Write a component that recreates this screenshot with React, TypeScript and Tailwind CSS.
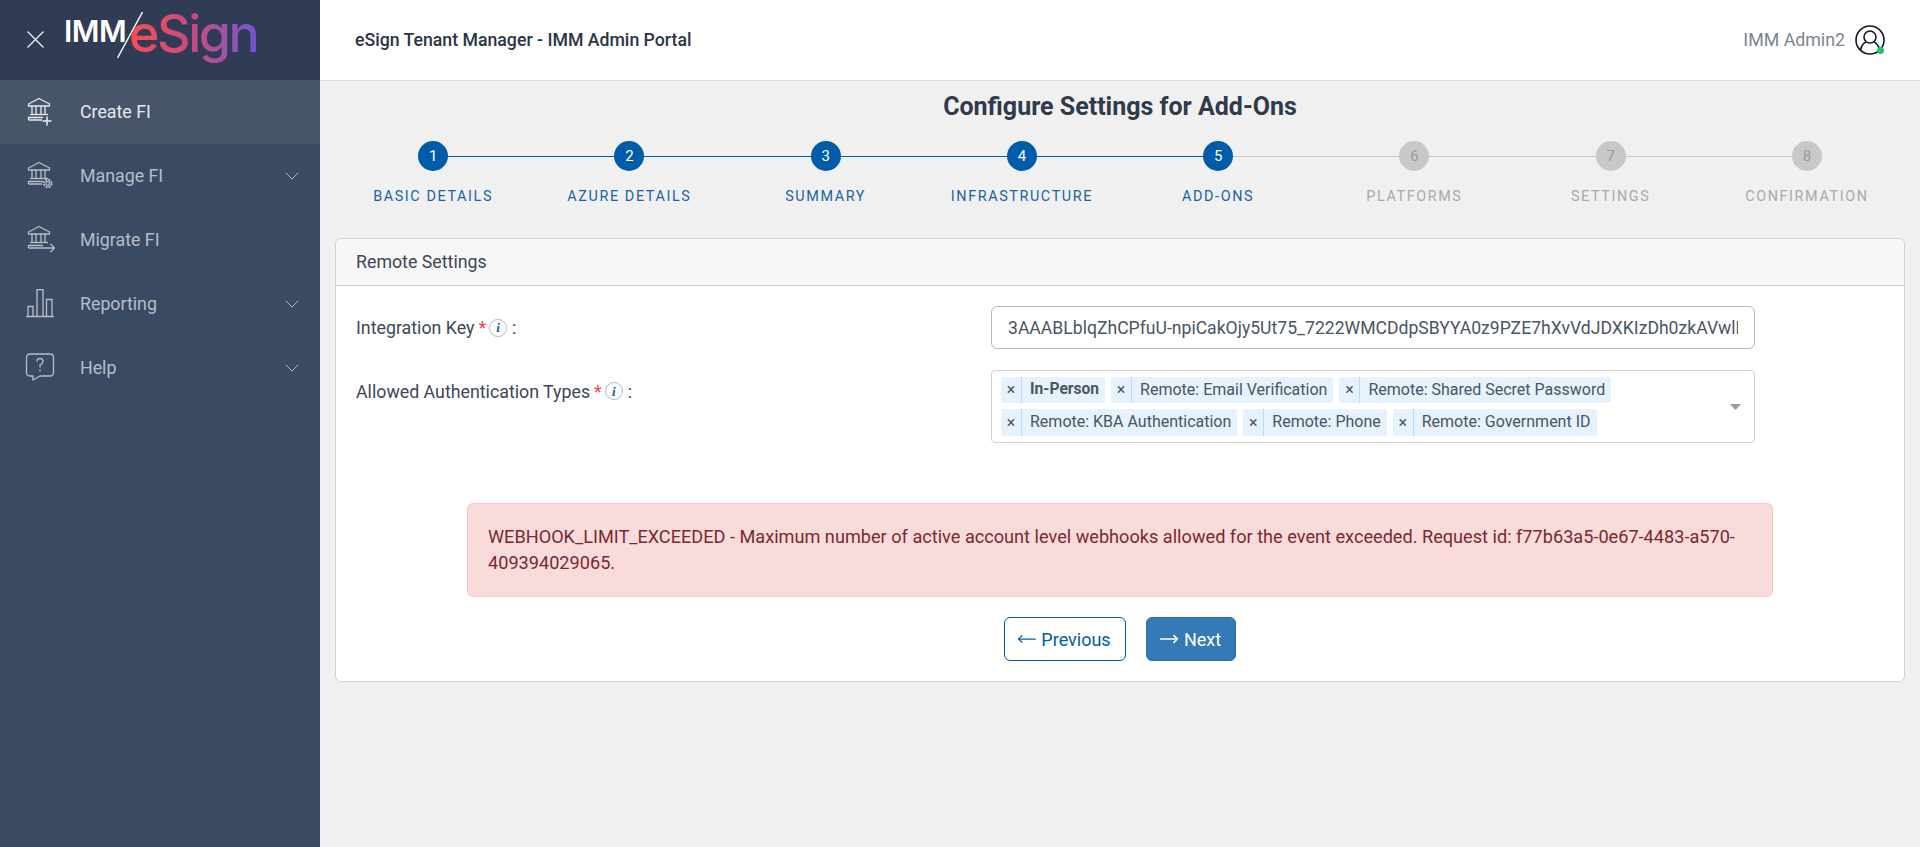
import React from 'react';
import { ChevronDown, MoveLeft, MoveRight } from 'lucide-react';

const FONT = "font-['Roboto',sans-serif]";

const BankBase: React.FC<{ children?: React.ReactNode }> = ({ children }) => (
  <svg width="30" height="30" viewBox="0 0 30 30" fill="none" stroke="currentColor" strokeWidth="1.3">
    <path d="M3.5 7 L14 1.5 L24.5 7 V9 H3.5 Z" strokeLinejoin="round" />
    <path d="M7 9 V17 M11 9 V17 M16 9 V17 M20 9 V17" />
    <path d="M5 17.5 H23" />
    <path d="M3.5 23 V20.5 H18 M3.5 23 H17" />
    {children}
  </svg>
);

const NAV = [
  {
    label: 'Create FI',
    active: true,
    icon: (
      <BankBase>
        <path d="M22 19.5 V28.5 M17.5 24 H26.5" strokeWidth="1.5" />
      </BankBase>
    ),
  },
  {
    label: 'Manage FI',
    chevron: true,
    icon: (
      <BankBase>
        <circle cx="22.7" cy="22.5" r="1.8" />
        <circle cx="22.7" cy="22.5" r="3.8" strokeDasharray="2 1" strokeWidth="1.9" />
      </BankBase>
    ),
  },
  {
    label: 'Migrate FI',
    icon: (
      <BankBase>
        <path d="M17 23 H29.5 M25.5 19 L29.5 23 L25.5 27" />
      </BankBase>
    ),
  },
  {
    label: 'Reporting',
    chevron: true,
    icon: (
      <svg width="30" height="30" viewBox="0 0 30 30" fill="none" stroke="currentColor" strokeWidth="1.3">
        <path d="M1 27.5 H29 M3 27 V17.5 H8 V27 M12 27 V0.7 H18 V27 M21.5 27 V10.5 H27 V27" />
      </svg>
    ),
  },
  {
    label: 'Help',
    chevron: true,
    icon: (
      <svg width="30" height="30" viewBox="0 0 30 30" fill="none" stroke="currentColor" strokeWidth="1.3">
        <path d="M5 1 H25 Q28.5 1 28.5 4.5 V19.5 Q28.5 23 25 23 H15 L8 27 V23 H5 Q1.5 23 1.5 19.5 V4.5 Q1.5 1 5 1 Z" strokeLinejoin="round" />
        <path d="M12 8.5 Q12 5.5 15 5.5 Q18 5.5 18 8.5 Q18 10.5 15 12 V14.5 M15 16.5 V18.5" />
      </svg>
    ),
  },
];

const STEPS = [
  'BASIC DETAILS',
  'AZURE DETAILS',
  'SUMMARY',
  'INFRASTRUCTURE',
  'ADD-ONS',
  'PLATFORMS',
  'SETTINGS',
  'CONFIRMATION',
];

const CHIPS = [
  ['In-Person', 'Remote: Email Verification', 'Remote: Shared Secret Password'],
  ['Remote: KBA Authentication', 'Remote: Phone', 'Remote: Government ID'],
];

const InfoIcon = () => (
  <span className="mx-[3px] mb-[2px] inline-flex h-[18px] w-[18px] items-center justify-center rounded-full border border-[#a9bdd1] font-['Liberation_Serif',serif] text-[13px] font-bold italic leading-none text-[#0b5ca5]">
    i
  </span>
);

const FieldLabel: React.FC<{ text: string }> = ({ text }) => (
  <div className="flex w-[635px] shrink-0 items-center text-[17.8px] text-[#3d4757]">
    <span>{text}</span>
    <span className="ml-[4px] text-[#e5484d]">*</span>
    <InfoIcon />
    <span className="ml-[2px]">:</span>
  </div>
);

const App: React.FC = () => {
  return (
    <div className={`flex min-h-screen bg-[#f0f0f0] ${FONT}`}>
      {/* Sidebar */}
      <aside className="flex w-[320px] shrink-0 flex-col bg-[#3b4a63]">
        <div className="flex h-[80px] items-start overflow-hidden bg-[#303c55] pl-[27px]">
          <svg width="17" height="17" viewBox="0 0 17 17" stroke="#f3f4f6" strokeWidth="1.2" className="mr-[20px] mt-[31px] shrink-0">
            <path d="M0.5 0.5 L16.5 16.5 M16.5 0.5 L0.5 16.5" />
          </svg>
          <span className="mt-[11px] w-[62px] shrink-0 font-['Inter',sans-serif] text-[30px] font-semibold leading-[40px] tracking-[-0.5px] text-white">IMM</span>
          <svg width="26" height="46" viewBox="0 0 26 46" stroke="#ffffff" strokeWidth="1.4" className="-ml-[9px] mt-[12px] shrink-0">
            <path d="M25.5 0 L0.5 46" />
          </svg>
          <span className="-ml-[14px] mt-[4px] bg-gradient-to-r from-[#ff4a4f] via-[#c9487f] to-[#6f52cf] bg-clip-text pb-[10px] font-['Inter',sans-serif] text-[52px] font-medium leading-[60px] tracking-[-2.5px] text-transparent">
            eSign
          </span>
        </div>
        <nav className="flex flex-col">
          {NAV.map((item) => (
            <div
              key={item.label}
              className={`flex h-[64px] items-center pl-[25px] pr-[16px] text-[17.8px] ${item.active ? 'bg-[#475569] text-[#e8eaee]' : 'text-[#b6bdc9]'}`}
            >
              <span className="flex w-[55px] shrink-0">{item.icon}</span>
              <span className="flex-1 pt-[1px]">{item.label}</span>
              {item.chevron && <ChevronDown size={24} strokeWidth={1} />}
            </div>
          ))}
        </nav>
      </aside>

      <div className="flex min-w-0 flex-1 flex-col">
        {/* Header */}
        <header className="flex h-[81px] items-center justify-between border-b border-[#d9dde3] bg-white pl-[35px] pr-[35px]">
          <div className="text-[17.7px] font-medium text-[#2a3546]">eSign Tenant Manager - IMM Admin Portal</div>
          <div className="flex items-center gap-[10px]">
            <span className="text-[17.8px] text-[#7b8491]">IMM Admin2</span>
            <span className="relative h-[30px] w-[30px]">
              <svg width="30" height="30" viewBox="0 0 30 30" fill="none" stroke="#111827" strokeWidth="1.6">
                <circle cx="15" cy="15" r="14" />
                <circle cx="15" cy="12" r="6" />
                <path d="M5.5 25 Q7 18.5 11 17 M24.5 25 Q23 18.5 19 17" />
              </svg>
              <span className="absolute bottom-[1px] right-[1px] h-[7px] w-[7px] rounded-full bg-[#22c55e]" />
            </span>
          </div>
        </header>

        {/* Content */}
        <main className="px-[15px] pt-[8px]">
          <h1 className="text-center text-[25px] font-bold leading-[36px] text-[#2f3a4b]">Configure Settings for Add-Ons</h1>

          <div className="mb-[31px] mt-[16px] flex">
            {STEPS.map((label, i) => {
              const done = i < 5;
              return (
                <div key={label} className="relative flex flex-1 flex-col items-center">
                  {i < STEPS.length - 1 && (
                    <span className={`absolute left-1/2 top-[15px] h-px w-full ${i < 4 ? 'bg-[#005ca8]' : 'bg-[#c8c8c8]'}`} />
                  )}
                  <span
                    className={`relative flex h-[30px] w-[30px] items-center justify-center rounded-full text-[15px] ${done ? 'bg-[#005ca8] text-white' : 'bg-[#c8c8c8] text-[#9a9a9a]'}`}
                  >
                    {i + 1}
                  </span>
                  <span className={`mt-[16px] text-[14.4px] leading-5 tracking-[1.6px] ${done ? 'text-[#1a62a6]' : 'text-[#a9a9a9]'}`}>{label}</span>
                </div>
              );
            })}
          </div>

          {/* Card */}
          <section className="rounded-[6px] border border-[#d2d2d2] bg-white">
            <div className="flex h-[47px] items-center rounded-t-[6px] border-b border-[#d2d2d2] bg-[#f7f7f7] px-[20px] pt-[1px] text-[17.8px] text-[#3d4757]">
              Remote Settings
            </div>
            <div className="px-[20px] pb-[20px] pt-[20px]">
              <div className="mb-[21px] flex items-center">
                <div className="pt-[2px]">
                  <FieldLabel text="Integration Key" />
                </div>
                <input
                  readOnly
                  value="3AAABLblqZhCPfuU-npiCakOjy5Ut75_7222WMCDdpSBYYA0z9PZE7hXvVdJDXKIzDh0zkAVwlKpQ"
                  className="h-[43px] w-[764px] rounded-[6px] border border-[#b3b9c6] bg-white px-[16px] text-[17.6px] text-[#4b5563] outline-none"
                />
              </div>
              <div className="mb-[60px] flex items-start">
                <div className="pt-[9px]">
                  <FieldLabel text="Allowed Authentication Types" />
                </div>
                <div className="flex h-[73px] w-[764px] items-center rounded-[4px] border border-[#cfcfcf] pl-[9px] pr-[13px]">
                  <div className="flex flex-1 flex-col gap-[6px]">
                    {CHIPS.map((row, r) => (
                      <div key={r} className="flex gap-[6px]">
                        {row.map((chip) => (
                          <span key={chip} className={`flex items-center rounded-[2px] bg-[#e6f2fd] text-[#4b5563] ${r === 0 ? 'h-[26px]' : 'h-[27px]'}`}>
                            <span className="flex h-full w-[21px] items-center justify-center border-r border-[#b8dafc] text-base text-[#4b5563]">×</span>
                            <span className={`pb-[1px] pl-[8px] pr-[6px] ${chip === 'In-Person' ? 'text-[15.6px] font-bold' : 'text-base'}`}>{chip}</span>
                          </span>
                        ))}
                      </div>
                    ))}
                  </div>
                  <svg width="11" height="6" viewBox="0 0 11 6" className="shrink-0">
                    <path d="M0 0 H11 L5.5 6 Z" fill="#999999" />
                  </svg>
                </div>
              </div>

              <div className="mx-auto w-[1306px] rounded-[6px] border border-[#f5c6cb] bg-[#f9dbdc] px-[20px] py-[20px] text-[18.15px] leading-[26px] text-[#7a2a2e]">
                WEBHOOK_LIMIT_EXCEEDED - Maximum number of active account level webhooks allowed for the event exceeded. Request id: f77b63a5-0e67-4483-a570-409394029065.
              </div>

              <div className="mt-[20px] flex justify-center gap-[20px]">
                <button className="flex h-[44px] w-[122px] items-center justify-center gap-[4px] rounded-[6px] border border-[#005ca8] bg-white pr-[2px] text-[18px] text-[#005ca8]">
                  <MoveLeft size={20} strokeWidth={1.5} />
                  Previous
                </button>
                <button className="flex h-[44px] w-[90px] items-center justify-center gap-[5px] rounded-[6px] border border-[#2e6da4] bg-[#337ab7] pr-[2px] text-[18px] text-white">
                  <MoveRight size={20} strokeWidth={2} />
                  Next
                </button>
              </div>
            </div>
          </section>
        </main>
      </div>
    </div>
  );
};

export default App;
